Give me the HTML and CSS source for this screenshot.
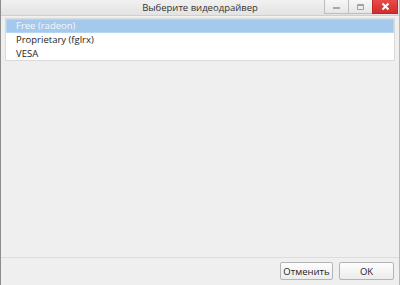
FILE: index.html
```html
<!DOCTYPE html>
<html lang="ru">
<head>
    <meta charset="UTF-8">
    <title>Выберите видеодрайвер</title>
    <link rel="stylesheet" href="styles.css">
</head>
<body>
    <div class="window">
        <div class="titlebar">
            <div class="title">Выберите видеодрайвер</div>
            <div class="controls">
                <div class="ctl min"><span class="min-bar"></span></div>
                <div class="ctl max"><span class="max-box"></span></div>
                <div class="ctl close">
                    <svg width="9" height="9" viewBox="0 0 9 9"><path d="M1.5 1.5 L7.5 7.5 M7.5 1.5 L1.5 7.5" stroke="#fff" stroke-width="2"/></svg>
                </div>
            </div>
        </div>
        <div class="content">
            <ul class="driver-list">
                <li class="selected">Free (radeon)</li>
                <li>Proprietary (fglrx)</li>
                <li>VESA</li>
            </ul>
        </div>
        <div class="footer">
            <button class="btn">Отменить</button>
            <button class="btn">OK</button>
        </div>
    </div>
</body>
</html>
```

FILE: styles.css
```css
* {
    margin: 0;
    padding: 0;
    box-sizing: border-box;
}

body {
    width: 400px;
    height: 285px;
    background: #efefef;
    font-family: 'Open Sans', 'DejaVu Sans', sans-serif;
    font-size: 9.5px;
    color: #1e1e1e;
    overflow: hidden;
}

.window {
    height: 285px;
    display: flex;
    flex-direction: column;
    border-left: 1px solid #8c8c8c;
    border-right: 1px solid #b8b8b8;
}

.titlebar {
    height: 16px;
    display: flex;
    align-items: flex-start;
    background: linear-gradient(#f1f1f1, #e3e3e3);
    border-bottom: 1px solid #cfcfcf;
    position: relative;
}

.title {
    flex: 1;
    text-align: center;
    line-height: 15px;
    color: #333;
    font-size: 9.5px;
}

.controls {
    position: absolute;
    right: 1px;
    top: 0;
    display: flex;
}

.ctl {
    width: 25px;
    height: 14px;
    display: flex;
    align-items: center;
    justify-content: center;
    background: linear-gradient(#f7f7f7, #e6e6e6);
    border: 1px solid #bdbdbd;
    border-top: none;
    margin-left: -1px;
}

.min-bar {
    width: 7px;
    height: 2px;
    background: #a8a8a8;
    margin-top: 3px;
}

.max-box {
    width: 7px;
    height: 6px;
    border: 1px solid #a0a0a0;
    border-top-width: 2px;
    border-radius: 1px;
}

.ctl.close {
    width: 26px;
    background: linear-gradient(#ea4a4a, #d02c2c);
    border-color: #c02828;
}

.content {
    flex: 1;
    padding: 2px 4px 0 4px;
}

.driver-list {
    list-style: none;
    background: #fff;
    border: 1px solid #dadada;
}

.driver-list li {
    height: 14px;
    line-height: 14px;
    padding-left: 10px;
}

.driver-list li:last-child {
    height: 13px;
}

.driver-list li.selected {
    background: #a3c9ec;
    color: #f4f8fc;
    border: 1px solid #b6d5f1;
    line-height: 12px;
    padding-left: 9px;
}

.footer {
    height: 28px;
    border-top: 1px solid #dcdcdc;
    display: flex;
    justify-content: flex-end;
    align-items: flex-start;
    gap: 6px;
    padding: 4px 5px 0 0;
}

.btn {
    width: 53px;
    height: 18px;
    font-family: inherit;
    font-size: 9.5px;
    color: #1e1e1e;
    background: linear-gradient(#fdfdfd, #ececec);
    border: 1px solid #b4b4b4;
    border-radius: 2px;
}

.btn + .btn {
    width: 55px;
}
```
